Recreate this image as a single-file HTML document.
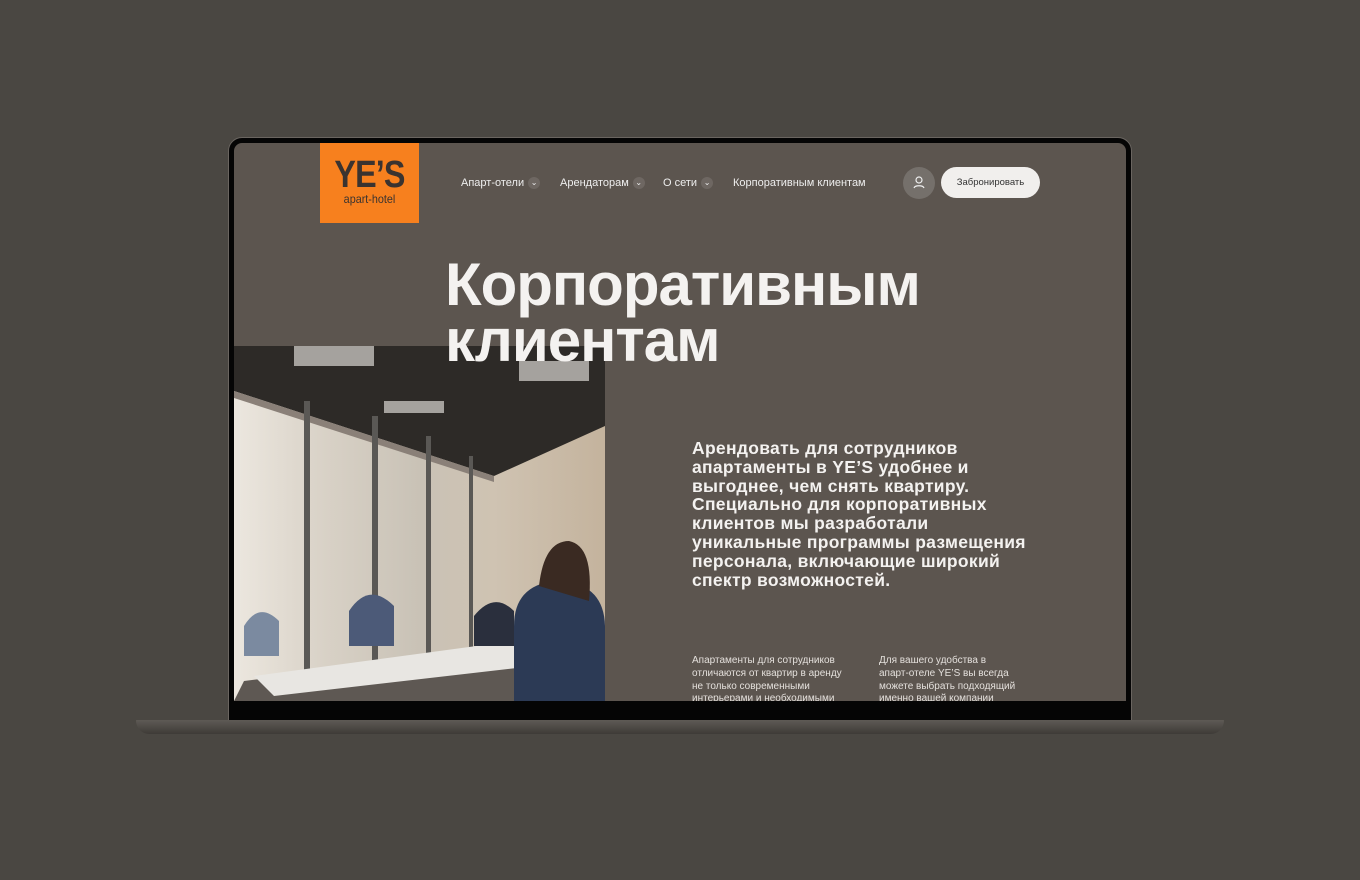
<!DOCTYPE html>
<html><head><meta charset="utf-8"><style>
*{margin:0;padding:0;box-sizing:border-box}
body{width:1360px;height:880px;background:#4a4742;position:relative;overflow:hidden;font-family:"Liberation Sans",sans-serif}
.bezel{position:absolute;left:228px;top:137px;width:904px;height:584px;background:#050505;border-radius:14px 14px 0 0;border:1px solid #6a6560}
.screen{position:absolute;left:234px;top:143px;width:892px;height:558px;background:#5c554f;overflow:hidden;border-radius:8px 8px 0 0}
.base{position:absolute;left:136px;top:720px;width:1088px;height:14px;background:linear-gradient(#5e5a55,#3e3b37);border-radius:2px 2px 40px 40px}
.logo{position:absolute;left:86px;top:0;width:99px;height:80px;background:#f7801e;text-align:center;color:#3a3330}
.logo b{display:block;font-size:38px;font-weight:bold;margin-top:14px;letter-spacing:-1px;line-height:36px;transform:scaleX(0.85)}
.logo span{font-size:12px;display:block;margin-top:-1px;transform:scaleX(0.9)}
.nav{position:absolute;top:34px;font-size:11px;color:#eee}
.chev{display:inline-block;width:12px;height:12px;border-radius:50%;background:#6e6762;vertical-align:middle;margin-left:4px;font-size:8px;text-align:center;line-height:12px}
.user{position:absolute;left:669px;top:24px;width:32px;height:32px;border-radius:50%;background:#75706b}
.btn{position:absolute;left:707px;top:24px;width:99px;height:31px;border-radius:16px;background:#f1efed;color:#333;font-size:9.5px;text-align:center;line-height:31px}
h1{position:absolute;left:211px;top:114px;font-size:60px;line-height:56px;color:#f4f2f0;font-weight:bold;letter-spacing:-1px;white-space:nowrap}
.lead{position:absolute;left:458px;top:296px;font-size:17.5px;line-height:18.8px;color:#f4f2f0;font-weight:bold;white-space:nowrap;letter-spacing:0.3px}
.small{position:absolute;top:512px;font-size:10px;line-height:12.8px;color:#e4e0dc;white-space:nowrap}
.photo{position:absolute;left:0;top:203px;width:371px;height:355px;background:linear-gradient(90deg,#ece7df 0%,#d8d1c6 25%,#c9c2b6 50%,#cfc3b2 70%,#c4b39d 100%);overflow:hidden}
</style></head><body>
<div class="bezel"></div>
<div class="screen">
 <div class="photo">
  <svg width="371" height="355" style="position:absolute;left:0;top:0">
   <polygon points="0,0 371,0 371,80 260,130 0,45" fill="#2d2a27"/>
   <polygon points="0,45 260,130 260,136 0,52" fill="#8a8078"/>
   <rect x="60" y="0" width="80" height="20" fill="#d8d6d2" opacity=".7"/>
   <rect x="150" y="55" width="60" height="12" fill="#d8d6d2" opacity=".7"/>
   <rect x="285" y="15" width="70" height="20" fill="#d8d6d2" opacity=".7"/>
   <rect x="70" y="55" width="6" height="300" fill="#5a5855"/>
   <rect x="138" y="70" width="6" height="285" fill="#5a5855"/>
   <rect x="192" y="90" width="5" height="265" fill="#5a5855"/>
   <rect x="235" y="110" width="4" height="245" fill="#5a5855"/>
   <polygon points="10,335 300,300 371,310 371,355 0,355" fill="#5e5853"/>
   <polygon points="20,330 280,295 300,320 40,350" fill="#e8e6e2"/>
   <path d="M280 355 v-75 q0-40 40-45 h10 q40 5 41 45 v75z" fill="#2c3a55"/>
   <path d="M305 240 q5-45 30-45 q25 5 20 60z" fill="#3a2a22"/>
   <path d="M115 300 v-35 q20-30 45-5 v40z" fill="#4c5a78"/>
   <path d="M240 300 v-30 q20-25 40-5 v35z" fill="#2a2f3d"/>
   <path d="M10 310 v-30 q15-25 35-5 v35z" fill="#7b8aa0"/>
  </svg>
 </div>
 <div class="logo"><b>YE’S</b><span>apart-hotel</span></div>
 <div class="nav" style="left:227px">Апарт-отели<span class="chev">⌄</span></div>
 <div class="nav" style="left:326px">Арендаторам<span class="chev">⌄</span></div>
 <div class="nav" style="left:429px">О сети<span class="chev">⌄</span></div>
 <div class="nav" style="left:499px">Корпоративным клиентам</div>
 <div class="user"><svg width="32" height="32" viewBox="0 0 32 32"><circle cx="16" cy="13" r="3" fill="none" stroke="#eee" stroke-width="1.2"/><path d="M11 21c1-3 9-3 10 0" fill="none" stroke="#eee" stroke-width="1.2"/></svg></div>
 <div class="btn">Забронировать</div>
 <h1>Корпоративным<br>клиентам</h1>
 <div class="lead">Арендовать для сотрудников<br>апартаменты в YE’S удобнее и<br>выгоднее, чем снять квартиру.<br>Специально для корпоративных<br>клиентов мы разработали<br>уникальные программы размещения<br>персонала, включающие широкий<br>спектр возможностей.</div>
 <div class="small" style="left:458px">Апартаменты для сотрудников<br>отличаются от квартир в аренду<br>не только современными<br>интерьерами и необходимыми</div>
 <div class="small" style="left:645px">Для вашего удобства в<br>апарт-отеле YE’S вы всегда<br>можете выбрать подходящий<br>именно вашей компании</div>
</div>
<div class="base"></div>
</body></html>
